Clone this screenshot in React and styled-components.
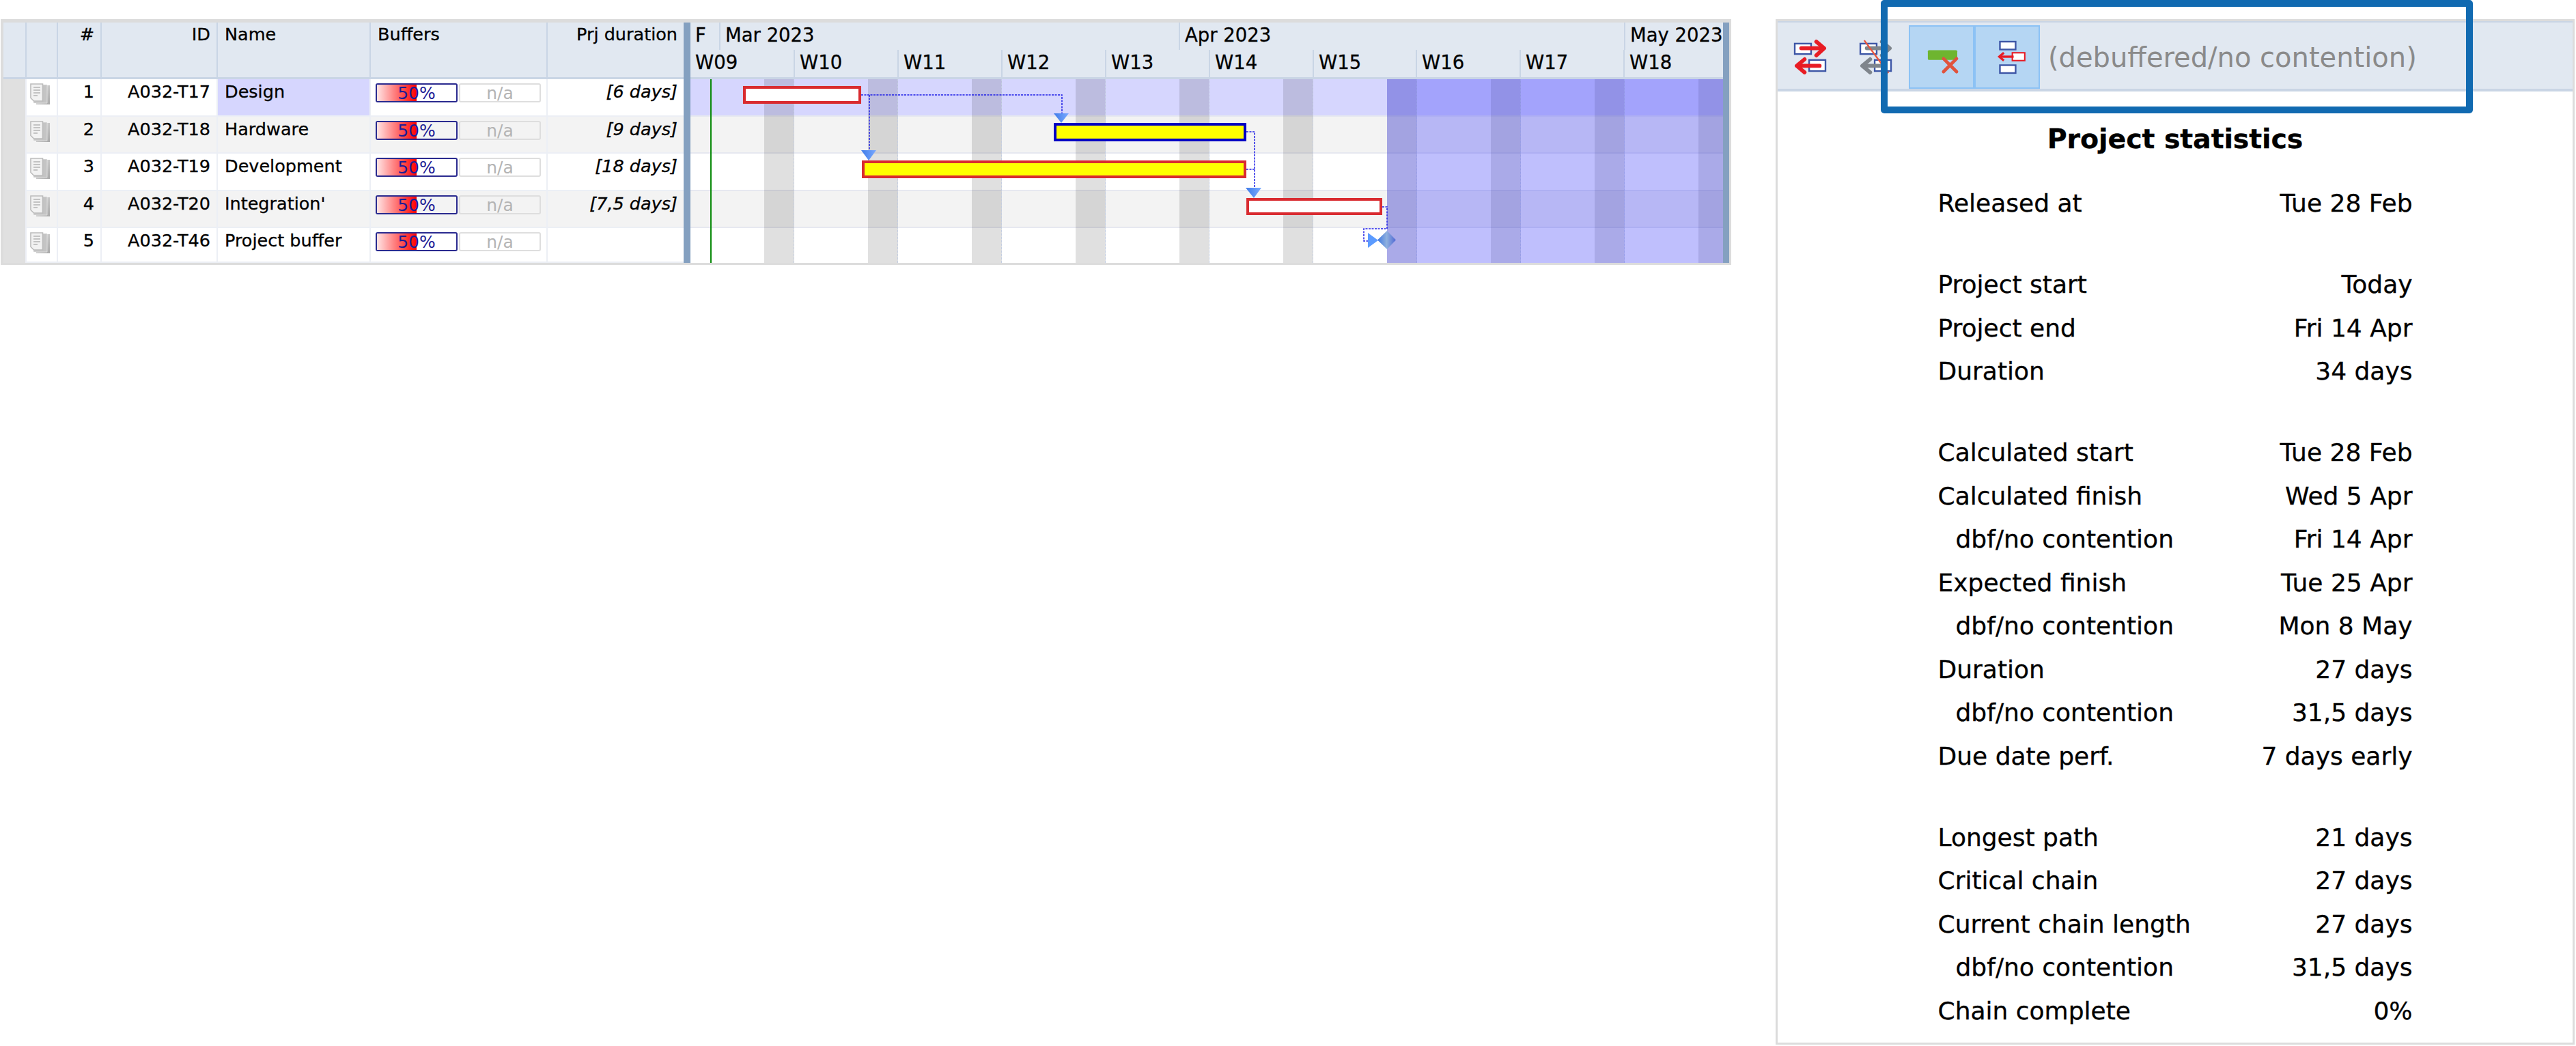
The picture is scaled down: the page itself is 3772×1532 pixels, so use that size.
import styled, { createGlobalStyle } from "styled-components";

const tasks = [
  { num: 1, id: "A032-T17", name: "Design", duration: "[6 days]", selected: true },
  { num: 2, id: "A032-T18", name: "Hardware", duration: "[9 days]" },
  { num: 3, id: "A032-T19", name: "Development", duration: "[18 days]" },
  { num: 4, id: "A032-T20", name: "Integration'", duration: "[7,5 days]" },
  { num: 5, id: "A032-T46", name: "Project buffer", duration: "" },
];

const months = [
  { label: "F", width: 44 },
  { label: "Mar 2023", width: 673 },
  { label: "Apr 2023", width: 652 },
  { label: "May 2023", width: 143 },
];

const weeks = [
  { label: "W09", width: 153 },
  { label: "W10", width: 152 },
  { label: "W11", width: 152 },
  { label: "W12", width: 152 },
  { label: "W13", width: 152 },
  { label: "W14", width: 152 },
  { label: "W15", width: 151 },
  { label: "W16", width: 152 },
  { label: "W17", width: 152 },
  { label: "W18", width: 144 },
];

const weekends = [0, 1, 2, 3, 4, 5, 6, 7, 8, 9];

const bars = [
  { x: 77, y: 10, w: 173, h: 26, line: "#d92b30", fill: "#fff" },
  { x: 532, y: 64, w: 282, h: 27, line: "#0000c4", fill: "#ffff00" },
  { x: 251, y: 119, w: 563, h: 26, line: "#d92b30", fill: "#ffff00" },
  { x: 814, y: 174, w: 199, h: 25, line: "#d92b30", fill: "#fff" },
];

const stats = [
  { label: "Released at", value: "Tue 28 Feb" },
  { gap: true },
  { label: "Project start", value: "Today" },
  { label: "Project end", value: "Fri 14 Apr" },
  { label: "Duration", value: "34 days" },
  { gap: true },
  { label: "Calculated start", value: "Tue 28 Feb" },
  { label: "Calculated finish", value: "Wed 5 Apr" },
  { label: "dbf/no contention", value: "Fri 14 Apr", sub: true },
  { label: "Expected finish", value: "Tue 25 Apr" },
  { label: "dbf/no contention", value: "Mon 8 May", sub: true },
  { label: "Duration", value: "27 days" },
  { label: "dbf/no contention", value: "31,5 days", sub: true },
  { label: "Due date perf.", value: "7 days early" },
  { gap: true },
  { label: "Longest path", value: "21 days" },
  { label: "Critical chain", value: "27 days" },
  { label: "Current chain length", value: "27 days" },
  { label: "dbf/no contention", value: "31,5 days", sub: true },
  { label: "Chain complete", value: "0%" },
];

const DocIcon = () => (
  <DocSvg viewBox="0 0 29 31">
    <defs>
      <linearGradient id="docShade" x1="0" y1="0" x2="1" y2="1">
        <stop offset="0" stopColor="#e4e4e4" />
        <stop offset="1" stopColor="#a8a8a8" />
      </linearGradient>
    </defs>
    <path d="M21 3h8v28H9v-3h12z" fill="url(#docShade)" />
    <path d="M17 2h8v27H5v-3h12z" fill="#c4c4c4" stroke="#f4f4f4" strokeWidth="0.6" />
    <path d="M1 1h17.5v25H5.5L1 21.5z" fill="#f2f2f2" stroke="#bcbcbc" strokeWidth="1.6" />
    <path d="M5 6h10M5 10h10M5 14h10M5 18h6" stroke="#b4b4b4" strokeWidth="1.6" />
  </DocSvg>
);

const SwapIcon = ({ muted }) => {
  const arrow = muted ? "#7f858c" : "#e81c24";
  return (
    <IconSvg viewBox="0 0 96 93">
      <rect x="24" y="26" width="25" height="16" fill="#fff" stroke="#3d56a6" strokeWidth="2.5" />
      <rect x="46" y="51" width="25" height="17" fill="#fff" stroke="#3d56a6" strokeWidth="2.5" />
      <path d="M34 33h33" stroke={arrow} strokeWidth="6" strokeLinecap="round" />
      <path d="M57 23l12 10-12 11" fill="none" stroke={arrow} strokeWidth="6" strokeLinecap="round" strokeLinejoin="round" />
      <path d="M29 60h33" stroke={arrow} strokeWidth="6" strokeLinecap="round" />
      <path d="M39 50l-12 10 12 10" fill="none" stroke={arrow} strokeWidth="6" strokeLinecap="round" strokeLinejoin="round" />
      {muted && <path d="M30 21l37 50" stroke="#e8553d" strokeWidth="2.5" />}
    </IconSvg>
  );
};

const BufferOffIcon = () => (
  <IconSvg viewBox="0 0 96 93">
    <rect x="27" y="36" width="45" height="15" rx="2" fill="#6eb52f" />
    <path d="M51 49l20 20M71 49L51 69" stroke="#e0533d" strokeWidth="5" strokeLinecap="round" />
  </IconSvg>
);

const ChainIcon = () => (
  <IconSvg viewBox="0 0 96 93">
    <rect x="37" y="23" width="24" height="12" fill="#fff" stroke="#3d56a6" strokeWidth="2.5" />
    <rect x="56" y="40" width="19" height="12" fill="#fff" stroke="#e81c24" strokeWidth="2.2" />
    <path d="M38 46h20" stroke="#e81c24" strokeWidth="3.5" />
    <path d="M43 40l-7 6 7 6" fill="none" stroke="#e81c24" strokeWidth="3.5" />
    <rect x="37" y="59" width="24" height="12" fill="#fff" stroke="#3d56a6" strokeWidth="2.5" />
  </IconSvg>
);

const DependencyLines = () => (
  <LinesSvg viewBox="1011 116 1512 269">
    <defs>
      <linearGradient id="arrowFill" x1="0" y1="0" x2="1" y2="0">
        <stop offset="0" stopColor="#3f7be8" />
        <stop offset="1" stopColor="#7aaaff" />
      </linearGradient>
      <linearGradient id="diamondFill" x1="0" y1="0" x2="1" y2="0">
        <stop offset="0" stopColor="#3f78e0" />
        <stop offset="0.5" stopColor="#8fb0de" />
        <stop offset="1" stopColor="#4f68d4" />
      </linearGradient>
    </defs>
    <g fill="none" stroke="#1f1fe6" strokeWidth="1.5" strokeDasharray="3 1.5">
      <path d="M1261 139H1555V166" />
      <path d="M1273 139V220" />
      <path d="M1825 193H1837V275" />
      <path d="M1825 248H1837" />
      <path d="M2024 303H2031V335H1997V353H2003" />
    </g>
    <path d="M1543 166h22l-11 14z" fill="url(#arrowFill)" />
    <path d="M1261 220h22l-11 15z" fill="url(#arrowFill)" />
    <path d="M1824 275h23l-11 15z" fill="url(#arrowFill)" />
    <path d="M2003 341l15 11-15 11z" fill="#5b9bff" />
    <path d="M2031 338l13 13.500-13 13.500-14-13.500z" fill="url(#diamondFill)" />
  </LinesSvg>
);

const App = () => {
  return (
    <Page>
      <GlobalStyle />
      <GanttPanel>
        <TaskTable>
          <HeaderRow>
            <HeaderCell $w={34} />
            <HeaderCell $w={46} />
            <HeaderCell $w={64} $right>#</HeaderCell>
            <HeaderCell $w={170} $right>ID</HeaderCell>
            <HeaderCell $w={224}>Name</HeaderCell>
            <HeaderCell $w={259}>Buffers</HeaderCell>
            <HeaderCell $w={199} $right>Prj duration</HeaderCell>
          </HeaderRow>
          {tasks.map((task) => (
            <TaskRow key={task.num}>
              <GripCell />
              <Cell $w={46}><DocIcon /></Cell>
              <Cell $w={64} $right>{task.num}</Cell>
              <Cell $w={170} $right>{task.id}</Cell>
              <Cell $w={224} $selected={task.selected}>{task.name}</Cell>
              <BufferCell>
                <Gauge>
                  <GaugeFill />
                  <GaugeText>50%</GaugeText>
                </Gauge>
                <EmptyGauge>n/a</EmptyGauge>
              </BufferCell>
              <Cell $w={199} $right $italic>{task.duration}</Cell>
            </TaskRow>
          ))}
        </TaskTable>
        <Splitter $w={10} />
        <Chart>
          <TimeRow $h={40}>
            {months.map((m) => (
              <TimeCell key={m.label} $w={m.width}>{m.label}</TimeCell>
            ))}
          </TimeRow>
          <TimeRow $h={43}>
            {weeks.map((w) => (
              <TimeCell key={w.label} $w={w.width}>{w.label}</TimeCell>
            ))}
          </TimeRow>
          <ChartBody>
            {tasks.map((task) => (
              <ChartRow key={task.num} $selected={task.selected} />
            ))}
            {weekends.map((n) => (
              <Weekend key={n} $n={n} />
            ))}
            <BufferZone />
            <TodayLine />
            {bars.map((bar) => (
              <Bar key={bar.x} $x={bar.x} $y={bar.y} $w={bar.w} $h={bar.h} $line={bar.line} $fill={bar.fill} />
            ))}
            <DependencyLines />
          </ChartBody>
        </Chart>
        <Splitter $w={9} />
      </GanttPanel>

      <StatsPanel>
        <Toolbar>
          <ToolButton><SwapIcon /></ToolButton>
          <ToolButton><SwapIcon muted /></ToolButton>
          <ToolButton $active><BufferOffIcon /></ToolButton>
          <ToolButton $active><ChainIcon /></ToolButton>
          <ToolLabel>(debuffered/no contention)</ToolLabel>
        </Toolbar>
        <Title>Project statistics</Title>
        <StatsList>
          {stats.map((row, i) =>
            row.gap ? (
              <StatGap key={i} />
            ) : (
              <StatRow key={i}>
                <StatLabel $sub={row.sub}>{row.label}</StatLabel>
                <span>{row.value}</span>
              </StatRow>
            )
          )}
        </StatsList>
      </StatsPanel>
      <Highlight />
    </Page>
  );
};

export default App;

const GlobalStyle = createGlobalStyle`
  html, body {
    margin: 0;
    padding: 0;
    background: #fff;
  }
  * {
    box-sizing: border-box;
  }
`;

const Page = styled.div`
  position: relative;
  width: 3772px;
  height: 1532px;
  overflow: hidden;
  padding: 28px 0 0 1px;
  display: flex;
  align-items: flex-start;
  gap: 65px;
  background: #fff;
  color: #000;
  font-family: "DejaVu Sans", Verdana, sans-serif;
  -webkit-text-stroke: 0.3px currentColor;
`;

const GanttPanel = styled.div`
  width: 2534px;
  height: 360px;
  display: flex;
  border: solid #dcdcdc;
  border-width: 5px 3px 3px 4px;
  background: #fff;
`;

const TaskTable = styled.div`
  width: 996px;
  flex: none;
  font-size: 25.5px;
`;

const HeaderRow = styled.div`
  display: flex;
  height: 83px;
  background: #e1e8f1;
  border-bottom: 3px solid #c9d5e5;
`;

const HeaderCell = styled.div`
  width: ${(p) => p.$w}px;
  padding: 0 9px 0 10px;
  line-height: 34px;
  text-align: ${(p) => (p.$right ? "right" : "left")};
  border-right: 2px solid #c9d5e5;
  white-space: nowrap;

  &:last-child {
    border-right: none;
  }
`;

const TaskRow = styled.div`
  display: flex;
  height: 54.5px;
  background: #fff;

  &:nth-child(odd) {
    background: #f3f3f3;
  }

  &:last-child {
    height: 51px;
  }
`;

const GripCell = styled.div`
  width: 34px;
  background: #e0e0e0;
  border-right: 2px solid #eceff5;
`;

const Cell = styled.div`
  position: relative;
  width: ${(p) => p.$w}px;
  padding: 0 9px 0 10px;
  line-height: 37px;
  text-align: ${(p) => (p.$right ? "right" : "left")};
  font-style: ${(p) => (p.$italic ? "italic" : "normal")};
  background: ${(p) => (p.$selected ? "#d6d6fe" : "transparent")};
  border-right: 2px solid #eceff5;
  border-bottom: 2px solid #eceff5;
  white-space: nowrap;

  &:last-child {
    border-right: none;
  }
`;

const DocSvg = styled.svg`
  position: absolute;
  left: 5px;
  top: 6px;
  width: 29px;
  height: 31px;
`;

const BufferCell = styled.div`
  width: 259px;
  display: flex;
  gap: 2px;
  padding: 6px 0 0 7px;
  border-right: 2px solid #eceff5;
  border-bottom: 2px solid #eceff5;
`;

const Gauge = styled.div`
  position: relative;
  width: 120px;
  height: 28px;
  border: 2px solid #2a2a8f;
  border-radius: 3px;
  overflow: hidden;
`;

const GaugeFill = styled.div`
  width: 50%;
  height: 100%;
  background: linear-gradient(90deg, #ffe4e4 0%, #ff0000 100%);
`;

const GaugeText = styled.span`
  position: absolute;
  inset: 0;
  text-align: center;
  font-size: 25px;
  line-height: 25px;
  color: #1c1c96;
  -webkit-text-stroke: 0;
`;

const EmptyGauge = styled.div`
  width: 120px;
  height: 28px;
  border: 2px solid #dedede;
  border-radius: 3px;
  text-align: center;
  font-size: 25px;
  line-height: 25px;
  color: #b4b4b4;
  -webkit-text-stroke: 0;
`;

const Splitter = styled.div`
  width: ${(p) => p.$w}px;
  flex: none;
  background: #84a0c0;
`;

const Chart = styled.div`
  width: 1512px;
  flex: none;
  font-size: 27.5px;
`;

const TimeRow = styled.div`
  display: flex;
  height: ${(p) => p.$h}px;
  background: #e1e8f1;
  border-bottom: ${(p) => (p.$h === 43 ? "3px solid #c9d5e5" : "none")};
`;

const TimeCell = styled.div`
  width: ${(p) => p.$w}px;
  padding-left: 7px;
  line-height: 36px;
  border-right: 2px solid #c9d5e5;
  white-space: nowrap;

  &:last-child {
    border-right: none;
  }
`;

const ChartBody = styled.div`
  position: relative;
  height: 269px;
  overflow: hidden;
`;

const ChartRow = styled.div`
  height: 54.5px;
  background: ${(p) => (p.$selected ? "#d6d6fe" : "#fff")};
  border-bottom: 2px solid #e6e8f0;

  &:nth-child(even) {
    background: #f3f3f3;
  }

  &:nth-child(5) {
    height: 51px;
    border-bottom: none;
  }
`;

const Weekend = styled.div`
  position: absolute;
  top: 0;
  bottom: 0;
  left: ${(p) => 108 + p.$n * 152}px;
  width: 44px;
  background: rgba(0, 0, 0, 0.12);
  border-right: 1px dashed #c4cee2;
`;

const BufferZone = styled.div`
  position: absolute;
  top: 0;
  bottom: 0;
  left: 1020px;
  right: 0;
  background: rgba(62, 62, 250, 0.33);
`;

const TodayLine = styled.div`
  position: absolute;
  top: 0;
  bottom: 0;
  left: 29px;
  width: 2px;
  background: #0a8a0a;
`;

const Bar = styled.div`
  position: absolute;
  left: ${(p) => p.$x}px;
  top: ${(p) => p.$y}px;
  width: ${(p) => p.$w}px;
  height: ${(p) => p.$h}px;
  border: 4.500px solid ${(p) => p.$line};
  background: ${(p) => p.$fill};
`;

const LinesSvg = styled.svg`
  position: absolute;
  inset: 0;
  width: 1512px;
  height: 269px;
`;

const StatsPanel = styled.div`
  width: 1170px;
  height: 1502px;
  border: solid #dcdcdc;
  border-width: 3px;
  font-size: 36px;
`;

const Toolbar = styled.div`
  display: flex;
  align-items: center;
  height: 103px;
  padding-top: 4px;
  background: #e1e8f1;
  border-top: 2px solid #c9d5e5;
  border-bottom: 4px solid #c9d5e5;
`;

const ToolButton = styled.div`
  width: 96px;
  height: 93px;
  background: ${(p) => (p.$active ? "#b5d6f3" : "transparent")};
  border: 2px solid ${(p) => (p.$active ? "#8cc2f5" : "transparent")};
`;

const IconSvg = styled.svg`
  display: block;
  width: 92px;
  height: 89px;
  overflow: visible;
`;

const ToolLabel = styled.span`
  margin-left: 12px;
  font-size: 40px;
  color: #8a8a8a;
  white-space: nowrap;
  -webkit-text-stroke: 0;
`;

const Title = styled.h2`
  margin: 0;
  padding-top: 45px;
  height: 132px;
  line-height: 48px;
  font-size: 39.5px;
  font-weight: bold;
  text-align: center;
  letter-spacing: -0.1px;
`;

const StatsList = styled.div`
  width: 695px;
  margin: 0 auto;
`;

const StatRow = styled.div`
  display: flex;
  justify-content: space-between;
  height: 63.5px;
  line-height: 63.5px;
  white-space: nowrap;
`;

const StatLabel = styled.span`
  padding-left: ${(p) => (p.$sub ? "26px" : "0")};
`;

const StatGap = styled.div`
  height: 55.5px;
`;

const Highlight = styled.div`
  position: absolute;
  left: 2754px;
  top: 0;
  width: 867px;
  height: 166px;
  border: 10px solid #116ab1;
  border-radius: 5px;
`;
